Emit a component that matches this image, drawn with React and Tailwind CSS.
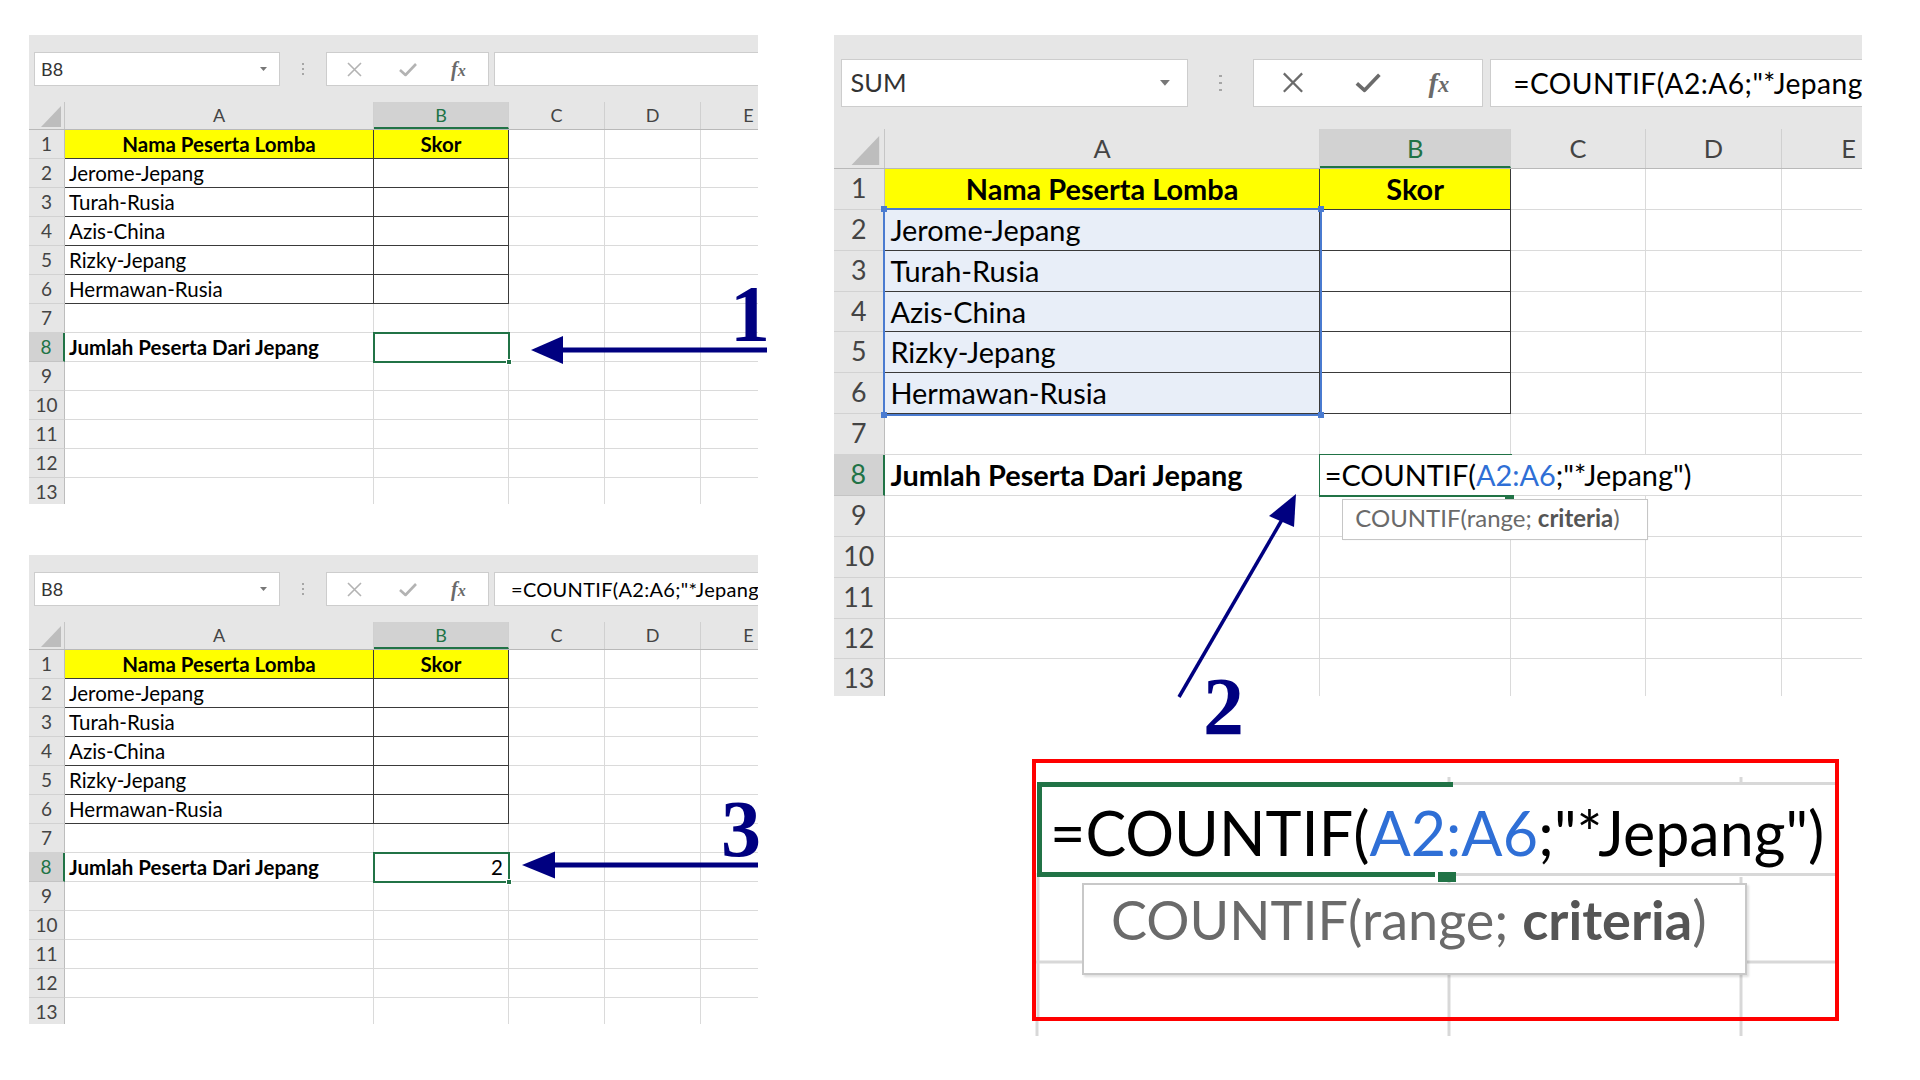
import React from 'react';
import clsx from 'clsx';

// Excel-like sheet, drawn at the size of the small screenshots (729 x 469).
// The large screenshot on the right is the same sheet with zoom 1.41.

const COLS = [
  { key: 'A', w: 'w-[309px]' },
  { key: 'B', w: 'w-[135px]' },
  { key: 'C', w: 'w-[96px]' },
  { key: 'D', w: 'w-[96px]' },
  { key: 'E', w: 'w-[96px]' },
];

const NAMES = ['Jerome-Jepang', 'Turah-Rusia', 'Azis-China', 'Rizky-Jepang', 'Hermawan-Rusia'];

const FORMULA = '=COUNTIF(A2:A6;"*Jepang")';

const CrossIcon = ({ color }) => (
  <svg width="17" height="15" viewBox="0 0 17 15">
    <path d="M2 1 L15 14 M15 1 L2 14" stroke={color} strokeWidth="1.6" fill="none" />
  </svg>
);

const CheckIcon = ({ color }) => (
  <svg width="20" height="15" viewBox="0 0 20 15">
    <path d="M2 8 L7.5 13 L18 2" stroke={color} strokeWidth="2.6" fill="none" strokeLinejoin="round" />
  </svg>
);

const Toolbar = ({ nameBox, formula, active }) => (
  <div className="h-[67px] bg-[#e6e6e6] flex items-start pt-[17px] pl-[5px]">
    {/* Name box */}
    <div className="w-[246px] h-[34px] shrink-0 bg-white border border-[#cdcdcd] flex items-center justify-between pl-[6px] pr-[12px]">
      <span className="text-[18px] text-[#333] leading-none">{nameBox}</span>
      <svg width="7" height="4" viewBox="0 0 7 4">
        <path d="M0 0 H7 L3.5 4 Z" fill="#777" />
      </svg>
    </div>
    {/* Grip dots */}
    <div className="w-[46px] h-[34px] shrink-0 flex flex-col items-center justify-center gap-[3px]">
      <span className="w-[2px] h-[2px] bg-[#a6a6a6]" />
      <span className="w-[2px] h-[2px] bg-[#a6a6a6]" />
      <span className="w-[2px] h-[2px] bg-[#a6a6a6]" />
    </div>
    {/* Cancel / enter / fx */}
    <div className="w-[163px] h-[34px] shrink-0 bg-white border border-[#cdcdcd] flex items-center pl-[19px]">
      <CrossIcon color={active ? '#6b6b6b' : '#b3b3b3'} />
      <span className="ml-[35px]">
        <CheckIcon color={active ? '#6b6b6b' : '#b3b3b3'} />
      </span>
      <span className="ml-[33px] font-['Liberation_Serif',serif] italic font-bold text-[20px] text-[#6a6a6a] leading-none">
        f<span className="text-[16px]">x</span>
      </span>
    </div>
    {/* Formula bar */}
    <div className="ml-[5px] flex-1 min-w-0 h-[34px] bg-white border-y border-l border-[#cdcdcd] flex items-center pl-[16px] text-[20px] tracking-[0.3px] text-black whitespace-nowrap overflow-hidden">
      {formula}
    </div>
  </div>
);

const HeaderRow = () => (
  <div className="flex h-[28px] bg-[#e6e6e6] border-b border-[#b9b9b9] text-[18px] leading-[27px] text-[#444]">
    <div className="w-[36px] shrink-0 border-r border-[#c6c6c6] flex items-end justify-end pr-[3px] pb-[2px]">
      <svg width="20" height="21" viewBox="0 0 20 21">
        <polygon points="20,0 20,21 0,21" fill="#bdbdbd" />
      </svg>
    </div>
    {COLS.map((c) => (
      <div
        key={c.key}
        className={clsx(
          c.w,
          'shrink-0 text-center border-r border-[#d0d0d0]',
          c.key === 'B' && 'bg-[#d2d2d2] text-[#217346] border-b-2 border-b-[#217346]'
        )}
      >
        {c.key}
      </div>
    ))}
  </div>
);

const Cell = ({ col, r, mode }) => {
  const inTable = r <= 6 && (col.key === 'A' || col.key === 'B');
  const selected = mode === 'edit' && col.key === 'A' && r >= 2 && r <= 6;

  let content = null;
  if (r === 1 && col.key === 'A') content = <div className="text-center font-bold">Nama Peserta Lomba</div>;
  if (r === 1 && col.key === 'B') content = <div className="text-center font-bold">Skor</div>;
  if (r >= 2 && r <= 6 && col.key === 'A') content = <div className="pl-[4px]">{NAMES[r - 2]}</div>;
  if (r === 8 && col.key === 'A') content = <div className="pl-[4px] font-bold">Jumlah Peserta Dari Jepang</div>;
  if (r === 8 && col.key === 'B' && mode === 'result') content = <div className="text-right pr-[5px]">2</div>;
  if (r === 8 && col.key === 'B' && mode === 'edit') {
    content = (
      <span className="relative z-10 inline-block bg-white pl-[3px] pr-[3px]">
        =COUNTIF(<span className="text-[#2f6fd6]">A2:A6</span>;"*Jepang")
      </span>
    );
  }

  return (
    <div
      className={clsx(
        col.w,
        'shrink-0 h-full whitespace-nowrap border-r border-b',
        inTable ? 'border-[#3a3a3a]' : 'border-[#dadada]',
        r === 1 && inTable && 'bg-[#ffff00]',
        selected && 'bg-[#e8eef8]'
      )}
    >
      {content}
    </div>
  );
};

const SheetRow = ({ r, mode }) => {
  const active = r === 8;
  return (
    <div className="flex h-[29px] shrink-0 leading-[28px] text-[20.5px] text-black">
      <div
        className={clsx(
          'w-[36px] shrink-0 text-center text-[19px] border-b',
          active
            ? 'bg-[#d2d2d2] text-[#217346] border-r-2 border-r-[#217346] border-b-[#c4c4c4]'
            : 'bg-[#e6e6e6] text-[#444] border-r border-r-[#bdbdbd] border-b-[#d2d2d2]'
        )}
      >
        {r}
      </div>
      {COLS.map((c) => (
        <Cell key={c.key} col={c} r={r} mode={mode} />
      ))}
    </div>
  );
};

const Sheet = ({ mode = 'blank', nameBox = 'B8', formula = '', className = '' }) => {
  const editing = mode === 'edit';
  return (
    <div className={clsx('relative w-[729px] h-[469px] shrink-0 overflow-hidden bg-white font-[Lato,sans-serif]', className)}>
      <Toolbar nameBox={nameBox} formula={formula} active={editing} />
      <HeaderRow />
      {Array.from({ length: 13 }, (_, i) => i + 1).map((r) => (
        <SheetRow key={r} r={r} mode={mode} />
      ))}

      {/* Range highlight A2:A6 while the formula is typed */}
      {editing && (
        <div className="absolute left-[35px] top-[123px] w-[311px] h-[147px] border-2 border-[#4a7bd0]">
          <span className="absolute -left-[3px] -top-[3px] w-[4px] h-[4px] bg-[#4a7bd0]" />
          <span className="absolute -right-[3px] -top-[3px] w-[4px] h-[4px] bg-[#4a7bd0]" />
          <span className="absolute -left-[3px] -bottom-[3px] w-[4px] h-[4px] bg-[#4a7bd0]" />
          <span className="absolute -right-[3px] -bottom-[3px] w-[4px] h-[4px] bg-[#4a7bd0]" />
        </div>
      )}

      {/* Active cell B8 */}
      {editing ? (
        <div className="absolute left-[344px] top-[297px] w-[137px] h-[31px] border-t-2 border-l-2 border-b-2 border-[#217346]">
          <span className="absolute -right-[1px] -bottom-[4px] w-[6px] h-[5px] bg-[#217346]" />
        </div>
      ) : (
        <div className="absolute left-[344px] top-[297px] w-[137px] h-[31px] border-2 border-[#217346]">
          <span className="absolute -right-[4px] -bottom-[4px] w-[6px] h-[6px] bg-[#217346] border border-white" />
        </div>
      )}

      {/* Function tooltip */}
      {editing && (
        <div className="absolute left-[360px] top-[329px] w-[217px] h-[29px] bg-white border border-[#c6c6c6] shadow-[1px_1px_1px_rgba(0,0,0,0.08)] pl-[9px] text-[17px] leading-[26px] text-[#6a6a6a] whitespace-nowrap">
          COUNTIF(range; <span className="font-bold text-[#555]">criteria</span>)
        </div>
      )}
    </div>
  );
};

const ZoomedCell = () => (
  <div className="relative w-[807px] h-[262px] border-4 border-[#ff0000] bg-white overflow-hidden font-[Lato,sans-serif]">
    {/* magnified grid lines behind the cell */}
    <svg className="absolute inset-0" width="799" height="254">
      <line x1="413" y1="14" x2="413" y2="254" stroke="#d8d8d8" strokeWidth="3" />
      <line x1="705" y1="14" x2="705" y2="254" stroke="#d8d8d8" strokeWidth="3" />
      <line x1="2" y1="110" x2="2" y2="254" stroke="#d8d8d8" strokeWidth="3" />
      <line x1="0" y1="199" x2="799" y2="199" stroke="#d8d8d8" strokeWidth="3" />
    </svg>

    <div className="relative mt-[19px] ml-[1px] h-[95px] bg-white border-l-[5px] border-[#217346] flex flex-col">
      <div className="flex items-start h-[5px]">
        <div className="w-[411px] h-[5px] bg-[#217346]" />
        <div className="flex-1 h-[3px] bg-[#d8d8d8]" />
      </div>
      <div className="h-[85px] pl-[8px] text-[61px] leading-[92px] text-black whitespace-nowrap">
        =COUNTIF(<span className="text-[#2f6fd6]">A2:A6</span>;"*Jepang")
      </div>
      <div className="flex items-start h-[5px]">
        <div className="w-[393px] h-[5px] bg-[#217346]" />
        <div className="ml-[3px] w-[18px] h-[10px] bg-[#217346]" />
        <div className="flex-1 h-[3px] mt-[1px] bg-[#d8d8d8]" />
      </div>
    </div>

    <div className="relative ml-[46px] mt-[6px] w-[665px] h-[92px] bg-white border-2 border-[#c8c8c8] shadow-[2px_2px_2px_rgba(0,0,0,0.12)] pl-[27px] text-[54px] leading-[70px] text-[#6a6a6a] whitespace-nowrap">
      COUNTIF(range; <span className="font-bold text-[#555]">criteria</span>)
    </div>
  </div>
);

const Callouts = () => (
  <>
    <svg className="absolute inset-0 pointer-events-none" width="1920" height="1080">
      {/* 1 */}
      <rect x="560" y="347.5" width="207" height="5" fill="#000080" />
      <polygon points="531,350 563,336 563,364" fill="#000080" />
      {/* 3 */}
      <rect x="551" y="862.5" width="207" height="5" fill="#000080" />
      <polygon points="522,865 555,851.5 555,878.5" fill="#000080" />
      {/* 2 */}
      <line x1="1179" y1="697" x2="1283" y2="518" stroke="#000080" strokeWidth="3.5" />
      <polygon points="1296,494 1294,527 1269,516" fill="#000080" />
    </svg>
    <span className="absolute left-[730px] top-[274px] font-['Liberation_Serif',serif] font-bold text-[80px] leading-none text-[#000080]">1</span>
    <span className="absolute left-[721px] top-[789px] font-['Liberation_Serif',serif] font-bold text-[80px] leading-none text-[#000080]">3</span>
    <span className="absolute left-[1203px] top-[666px] font-['Liberation_Serif',serif] font-bold text-[82px] leading-none text-[#000080]">2</span>
  </>
);

export default function App() {
  return (
    <div className="relative w-[1920px] h-[1080px] bg-white overflow-hidden flex items-start pl-[29px] pt-[35px]">
      {/* LEFT — before / after */}
      <div className="flex flex-col gap-[51px] shrink-0">
        <Sheet mode="blank" />
        <Sheet mode="result" formula='=COUNTIF(A2:A6;"*Jepang")' />
      </div>

      {/* RIGHT — typing the formula + magnified view */}
      <div className="ml-[76px] flex flex-col shrink-0">
        <Sheet mode="edit" nameBox="SUM" formula={FORMULA} className="[zoom:1.41]" />
        <div className="ml-[198px] mt-[63px]">
          <ZoomedCell />
          <svg width="807" height="15">
            <line x1="5" y1="0" x2="5" y2="15" stroke="#d8d8d8" strokeWidth="3" />
            <line x1="417" y1="0" x2="417" y2="15" stroke="#d8d8d8" strokeWidth="3" />
            <line x1="709" y1="0" x2="709" y2="15" stroke="#d8d8d8" strokeWidth="3" />
          </svg>
        </div>
      </div>

      <Callouts />
    </div>
  );
}
